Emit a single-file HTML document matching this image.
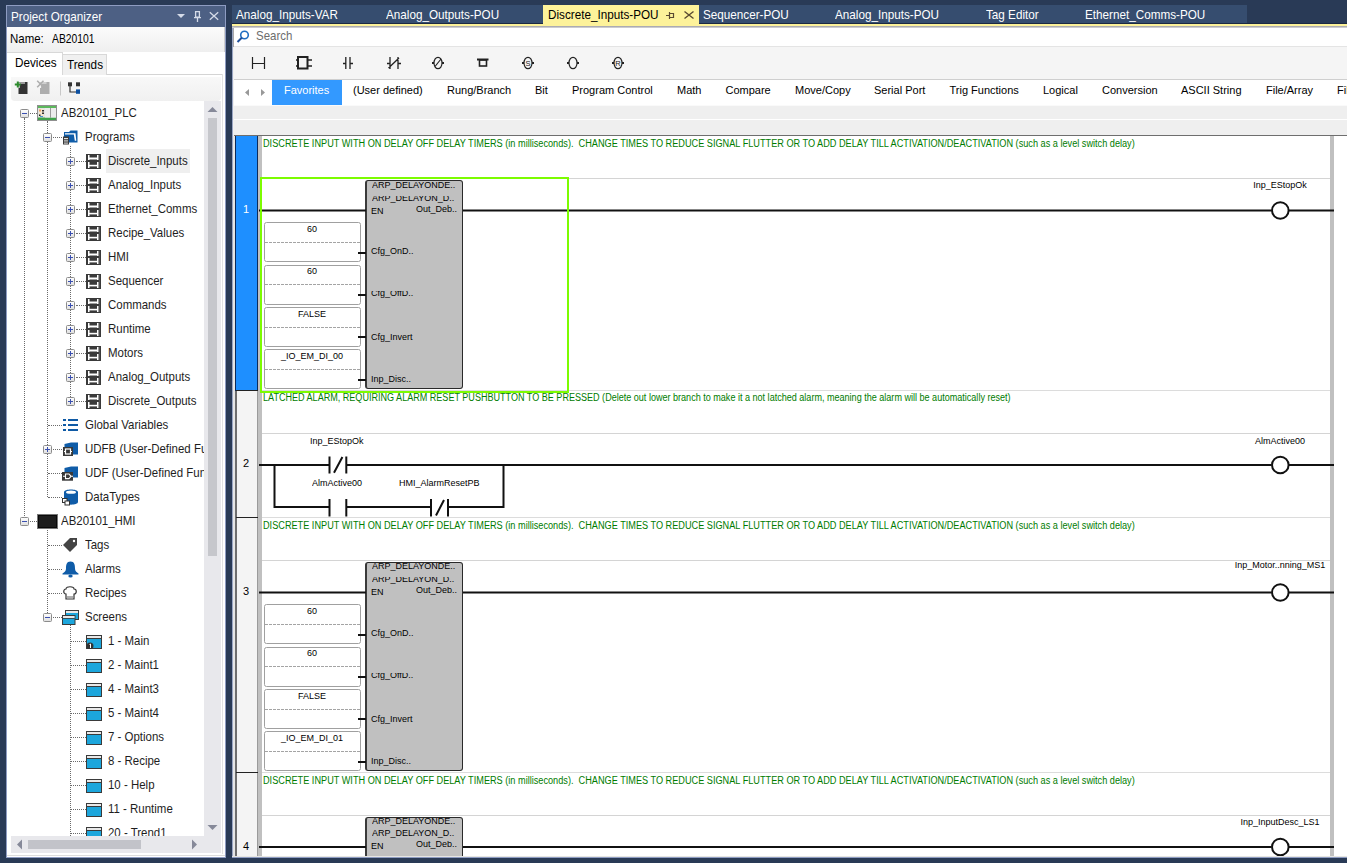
<!DOCTYPE html>
<html><head><meta charset="utf-8"><title>Discrete_Inputs-POU</title>
<style>
*{box-sizing:border-box}
html,body{margin:0;padding:0}
body{width:1347px;height:863px;background:#293a56;position:relative;overflow:hidden;font-family:'Liberation Sans', sans-serif;}
.a{position:absolute}
.t{position:absolute;white-space:pre;line-height:1}
.tr{font-size:12.6px;color:#1e1e1e;transform:scaleX(0.91);transform-origin:0 0}
.sg{font-size:12.6px;transform:scaleX(0.91);transform-origin:0 0}
.cat{font-size:11px;color:#000}
.lt{position:absolute;white-space:pre;line-height:1;font-size:9.5px;color:#000;transform:scaleX(0.947);transform-origin:0 0}
.ltc{transform:translateX(-50%) scaleX(0.947);transform-origin:50% 0}
.cm{position:absolute;white-space:pre;line-height:1;font-size:10px;color:#007c00;transform:scaleX(0.916);transform-origin:0 0}
</style></head><body>

<div class="a" style="left:6px;top:5px;width:220px;height:853px;background:#fff;border:1px solid #8e9cc2;border-top:none"></div>
<div class="a" style="left:6px;top:5px;width:220px;height:22px;background:#4d6084;border:1px solid #8e9cc2;border-bottom:none"></div>
<div class="t sg" style="left:11px;top:10px;font-size:13px;transform:scaleX(0.9);color:#fff">Project Organizer</div>
<svg class="a" style="left:170px;top:5px" width="56" height="22" viewBox="0 0 56 22"><path d="M7 9 L15 9 L11 13 Z" fill="#d5dbe8"/><path d="M25.6 6.6 h3.8 v5.6 h-3.8 z M24 12.6 h7 M27.5 12.6 v4.5" stroke="#d5dbe8" stroke-width="1.3" fill="none"/><path d="M39.8 7.3 L48.2 14.7 M48.2 7.3 L39.8 14.7" stroke="#d5dbe8" stroke-width="1.3"/></svg>
<div class="a" style="left:7px;top:27px;width:218px;height:25px;background:linear-gradient(#fbfbfb,#efefef);border-right:1px solid #cfcfcf"></div>
<div class="t sg" style="left:10px;top:33px;color:#000">Name:</div>
<div class="t sg" style="left:52px;top:33px;transform:scaleX(0.82);color:#000">AB20101</div>
<div class="a" style="left:62px;top:74px;width:161px;height:1px;background:#d4d4d4"></div>
<div class="a" style="left:222px;top:74px;width:1px;height:780px;background:#e2e2e2"></div>
<div class="a" style="left:62px;top:54px;width:45px;height:21px;background:#f0f0f0;border:1px solid #d8d8d8;border-bottom:none"></div>
<div class="a" style="left:7px;top:52px;width:56px;height:23px;background:#fff;border:1px solid #d8d8d8;border-left:none;border-bottom:none"></div>
<div class="t sg" style="left:15px;top:56px;font-size:13px;transform:scaleX(0.9);color:#000">Devices</div>
<div class="t sg" style="left:67px;top:58px;font-size:13px;transform:scaleX(0.9);color:#000">Trends</div>
<div class="a" style="left:11px;top:77px;width:210px;height:24px;background:linear-gradient(#f8f8f8,#f0f0f0);border-radius:0 0 4px 4px"></div>
<svg class="a" style="left:11px;top:77px" width="80" height="24" viewBox="0 0 80 24"><rect x="7.5" y="5" width="9" height="12" fill="#333"/><path d="M8 11 V6 h6" stroke="#fff" stroke-width="1.2" fill="none"/><path d="M3.8 7.5 h6 M6.8 4.5 v6" stroke="#2e8b2e" stroke-width="2"/><rect x="29" y="5" width="9.5" height="12" fill="#adadad"/><path d="M29.5 11 V6 h6" stroke="#f2f2f2" stroke-width="1.2" fill="none"/><path d="M26.2 3.8 L32.5 10.2 M32.5 3.8 L26.2 10.2" stroke="#adadad" stroke-width="1.5"/><rect x="49" y="4.5" width="1" height="14" fill="#c8c8c8"/><rect x="57" y="5.3" width="4" height="4" fill="#333"/><rect x="65" y="5.3" width="4" height="4" fill="#333"/><path d="M59 9 V15 H65" stroke="#333" stroke-width="1.2" fill="none"/><rect x="65" y="12.4" width="4" height="4.4" fill="#0b4fa0"/></svg>
<div class="a" style="left:11px;top:101px;width:193px;height:735px;background:#fff"></div>
<div class="a" style="left:204px;top:101px;width:17px;height:735px;background:#e8e8ec"></div>
<svg class="a" style="left:204px;top:101px" width="17" height="735"><path d="M3.5 11 L8.5 6 L13.5 11 Z" fill="#868999"/><path d="M3.5 724 L13.5 724 L8.5 729 Z" fill="#868999"/></svg>
<div class="a" style="left:208px;top:118px;width:9px;height:438px;background:#c6c7cc"></div>
<div class="a" style="left:11px;top:836px;width:210px;height:17px;background:#e8e8ec"></div>
<svg class="a" style="left:11px;top:836px" width="210" height="17"><path d="M6 8.5 L11 3.5 L11 13.5 Z" fill="#868999"/><path d="M181 3.5 L186 8.5 L181 13.5 Z" fill="#868999"/></svg>
<div class="a" style="left:28px;top:840px;width:113px;height:9px;background:#c2c3c9"></div>
<div class="a" style="left:7px;top:855px;width:218px;height:1px;background:#dcdcdc"></div>
<div class="a" style="left:0;top:0;width:204px;height:836px;overflow:hidden">
<div class="a" style="left:24px;top:118px;width:1px;height:402px;border-left:1px dotted #6a6a6a"></div>
<div class="a" style="left:47px;top:121px;width:1px;height:376px;border-left:1px dotted #6a6a6a"></div>
<div class="a" style="left:70px;top:146px;width:1px;height:255px;border-left:1px dotted #6a6a6a"></div>
<div class="a" style="left:47px;top:528px;width:1px;height:89px;border-left:1px dotted #6a6a6a"></div>
<div class="a" style="left:70px;top:624px;width:1px;height:212px;border-left:1px dotted #6a6a6a"></div>
<div class="a" style="left:30px;top:113px;width:7px;height:1px;border-top:1px dotted #6a6a6a"></div>
<svg class="a" style="left:20px;top:109px" width="9" height="9"><defs><linearGradient id="eg0" x1="0" y1="0" x2="0" y2="1"><stop offset="0" stop-color="#fff"/><stop offset="1" stop-color="#dedede"/></linearGradient></defs><rect x="0.5" y="0.5" width="8" height="8" rx="1" fill="url(#eg0)" stroke="#8c8c8c"/><rect x="2" y="4" width="5" height="1" fill="#3a4fb0"/></svg>
<svg class="a" style="left:37px;top:105px" width="20" height="16"><rect x="0.5" y="0.5" width="19" height="15" fill="#e4e4e4" stroke="#8f8f8f"/><rect x="1" y="1" width="18" height="2" fill="#5cb85c"/><rect x="1" y="12.5" width="18" height="2.5" fill="#3fa34a"/><rect x="2" y="4" width="5" height="8" fill="#f3e6cf"/><rect x="2" y="4.5" width="2" height="2" fill="#f0a060"/><rect x="5" y="5" width="2" height="1.5" fill="#333"/><rect x="5" y="7.5" width="2" height="1.5" fill="#333"/><rect x="2" y="9.5" width="1.5" height="1.5" fill="#222"/><rect x="3" y="11" width="3" height="1" fill="#4a90d0"/><rect x="8" y="3" width="5" height="9.5" fill="#ececec"/><rect x="13" y="3" width="1" height="9.5" fill="#9a9a9a"/><rect x="14" y="3" width="5" height="9.5" fill="#ececec"/></svg>
<div class="t tr" style="left:61.2px;top:107px">AB20101_PLC</div>
<div class="a" style="left:53px;top:137px;width:9px;height:1px;border-top:1px dotted #6a6a6a"></div>
<svg class="a" style="left:43px;top:133px" width="9" height="9"><defs><linearGradient id="eg1" x1="0" y1="0" x2="0" y2="1"><stop offset="0" stop-color="#fff"/><stop offset="1" stop-color="#dedede"/></linearGradient></defs><rect x="0.5" y="0.5" width="8" height="8" rx="1" fill="url(#eg1)" stroke="#8c8c8c"/><rect x="2" y="4" width="5" height="1" fill="#3a4fb0"/></svg>
<svg class="a" style="left:62px;top:129px" width="17" height="16"><path d="M2 3 h5 l1.5 -1.5 h7 v12 h-13.5 z" fill="#0f5ca8"/><path d="M3 4.2 h10.5 l0.8 7.5 h-1.5 l-1 -6.3 h-8.8 z" fill="#fff"/><rect x="1" y="7.5" width="6" height="8" fill="#3a3a3a"/><rect x="2" y="9" width="4" height="1.2" fill="#e0e0e0"/><rect x="2" y="11.3" width="4" height="1.2" fill="#cfcfcf"/><rect x="2" y="13.6" width="4" height="1" fill="#e0e0e0"/></svg>
<div class="t tr" style="left:84.7px;top:131px">Programs</div>
<div class="a" style="left:106px;top:149px;width:84px;height:24px;background:#efefef"></div>
<div class="a" style="left:76px;top:161px;width:10px;height:1px;border-top:1px dotted #6a6a6a"></div>
<svg class="a" style="left:66px;top:157px" width="9" height="9"><defs><linearGradient id="eg2" x1="0" y1="0" x2="0" y2="1"><stop offset="0" stop-color="#fff"/><stop offset="1" stop-color="#dedede"/></linearGradient></defs><rect x="0.5" y="0.5" width="8" height="8" rx="1" fill="url(#eg2)" stroke="#8c8c8c"/><rect x="2" y="4" width="5" height="1" fill="#3a4fb0"/><rect x="4" y="2" width="1" height="5" fill="#3a4fb0"/></svg>
<svg class="a" style="left:86px;top:154px" width="15" height="15"><rect x="0" y="0" width="15" height="15" fill="#3a3a3a"/><rect x="13" y="1" width="1" height="13" fill="#505050"/><rect x="2" y="1" width="1.5" height="5" fill="#fff"/><rect x="11" y="1" width="1.5" height="5" fill="#fff"/><rect x="3" y="3.5" width="8" height="2" fill="#fff"/><rect x="2" y="8" width="1.5" height="6" fill="#fff"/><rect x="11" y="8" width="1.5" height="6" fill="#fff"/><rect x="3" y="10.8" width="8" height="1.6" fill="#fff"/></svg>
<div class="t tr" style="left:107.7px;top:155px">Discrete_Inputs</div>
<div class="a" style="left:76px;top:185px;width:10px;height:1px;border-top:1px dotted #6a6a6a"></div>
<svg class="a" style="left:66px;top:181px" width="9" height="9"><defs><linearGradient id="eg3" x1="0" y1="0" x2="0" y2="1"><stop offset="0" stop-color="#fff"/><stop offset="1" stop-color="#dedede"/></linearGradient></defs><rect x="0.5" y="0.5" width="8" height="8" rx="1" fill="url(#eg3)" stroke="#8c8c8c"/><rect x="2" y="4" width="5" height="1" fill="#3a4fb0"/><rect x="4" y="2" width="1" height="5" fill="#3a4fb0"/></svg>
<svg class="a" style="left:86px;top:178px" width="15" height="15"><rect x="0" y="0" width="15" height="15" fill="#3a3a3a"/><rect x="13" y="1" width="1" height="13" fill="#505050"/><rect x="2" y="1" width="1.5" height="5" fill="#fff"/><rect x="11" y="1" width="1.5" height="5" fill="#fff"/><rect x="3" y="3.5" width="8" height="2" fill="#fff"/><rect x="2" y="8" width="1.5" height="6" fill="#fff"/><rect x="11" y="8" width="1.5" height="6" fill="#fff"/><rect x="3" y="10.8" width="8" height="1.6" fill="#fff"/></svg>
<div class="t tr" style="left:107.7px;top:179px">Analog_Inputs</div>
<div class="a" style="left:76px;top:209px;width:10px;height:1px;border-top:1px dotted #6a6a6a"></div>
<svg class="a" style="left:66px;top:205px" width="9" height="9"><defs><linearGradient id="eg4" x1="0" y1="0" x2="0" y2="1"><stop offset="0" stop-color="#fff"/><stop offset="1" stop-color="#dedede"/></linearGradient></defs><rect x="0.5" y="0.5" width="8" height="8" rx="1" fill="url(#eg4)" stroke="#8c8c8c"/><rect x="2" y="4" width="5" height="1" fill="#3a4fb0"/><rect x="4" y="2" width="1" height="5" fill="#3a4fb0"/></svg>
<svg class="a" style="left:86px;top:202px" width="15" height="15"><rect x="0" y="0" width="15" height="15" fill="#3a3a3a"/><rect x="13" y="1" width="1" height="13" fill="#505050"/><rect x="2" y="1" width="1.5" height="5" fill="#fff"/><rect x="11" y="1" width="1.5" height="5" fill="#fff"/><rect x="3" y="3.5" width="8" height="2" fill="#fff"/><rect x="2" y="8" width="1.5" height="6" fill="#fff"/><rect x="11" y="8" width="1.5" height="6" fill="#fff"/><rect x="3" y="10.8" width="8" height="1.6" fill="#fff"/></svg>
<div class="t tr" style="left:107.7px;top:203px">Ethernet_Comms</div>
<div class="a" style="left:76px;top:233px;width:10px;height:1px;border-top:1px dotted #6a6a6a"></div>
<svg class="a" style="left:66px;top:229px" width="9" height="9"><defs><linearGradient id="eg5" x1="0" y1="0" x2="0" y2="1"><stop offset="0" stop-color="#fff"/><stop offset="1" stop-color="#dedede"/></linearGradient></defs><rect x="0.5" y="0.5" width="8" height="8" rx="1" fill="url(#eg5)" stroke="#8c8c8c"/><rect x="2" y="4" width="5" height="1" fill="#3a4fb0"/><rect x="4" y="2" width="1" height="5" fill="#3a4fb0"/></svg>
<svg class="a" style="left:86px;top:226px" width="15" height="15"><rect x="0" y="0" width="15" height="15" fill="#3a3a3a"/><rect x="13" y="1" width="1" height="13" fill="#505050"/><rect x="2" y="1" width="1.5" height="5" fill="#fff"/><rect x="11" y="1" width="1.5" height="5" fill="#fff"/><rect x="3" y="3.5" width="8" height="2" fill="#fff"/><rect x="2" y="8" width="1.5" height="6" fill="#fff"/><rect x="11" y="8" width="1.5" height="6" fill="#fff"/><rect x="3" y="10.8" width="8" height="1.6" fill="#fff"/></svg>
<div class="t tr" style="left:107.7px;top:227px">Recipe_Values</div>
<div class="a" style="left:76px;top:257px;width:10px;height:1px;border-top:1px dotted #6a6a6a"></div>
<svg class="a" style="left:66px;top:253px" width="9" height="9"><defs><linearGradient id="eg6" x1="0" y1="0" x2="0" y2="1"><stop offset="0" stop-color="#fff"/><stop offset="1" stop-color="#dedede"/></linearGradient></defs><rect x="0.5" y="0.5" width="8" height="8" rx="1" fill="url(#eg6)" stroke="#8c8c8c"/><rect x="2" y="4" width="5" height="1" fill="#3a4fb0"/><rect x="4" y="2" width="1" height="5" fill="#3a4fb0"/></svg>
<svg class="a" style="left:86px;top:250px" width="15" height="15"><rect x="0" y="0" width="15" height="15" fill="#3a3a3a"/><rect x="13" y="1" width="1" height="13" fill="#505050"/><rect x="2" y="1" width="1.5" height="5" fill="#fff"/><rect x="11" y="1" width="1.5" height="5" fill="#fff"/><rect x="3" y="3.5" width="8" height="2" fill="#fff"/><rect x="2" y="8" width="1.5" height="6" fill="#fff"/><rect x="11" y="8" width="1.5" height="6" fill="#fff"/><rect x="3" y="10.8" width="8" height="1.6" fill="#fff"/></svg>
<div class="t tr" style="left:107.7px;top:251px">HMI</div>
<div class="a" style="left:76px;top:281px;width:10px;height:1px;border-top:1px dotted #6a6a6a"></div>
<svg class="a" style="left:66px;top:277px" width="9" height="9"><defs><linearGradient id="eg7" x1="0" y1="0" x2="0" y2="1"><stop offset="0" stop-color="#fff"/><stop offset="1" stop-color="#dedede"/></linearGradient></defs><rect x="0.5" y="0.5" width="8" height="8" rx="1" fill="url(#eg7)" stroke="#8c8c8c"/><rect x="2" y="4" width="5" height="1" fill="#3a4fb0"/><rect x="4" y="2" width="1" height="5" fill="#3a4fb0"/></svg>
<svg class="a" style="left:86px;top:274px" width="15" height="15"><rect x="0" y="0" width="15" height="15" fill="#3a3a3a"/><rect x="13" y="1" width="1" height="13" fill="#505050"/><rect x="2" y="1" width="1.5" height="5" fill="#fff"/><rect x="11" y="1" width="1.5" height="5" fill="#fff"/><rect x="3" y="3.5" width="8" height="2" fill="#fff"/><rect x="2" y="8" width="1.5" height="6" fill="#fff"/><rect x="11" y="8" width="1.5" height="6" fill="#fff"/><rect x="3" y="10.8" width="8" height="1.6" fill="#fff"/></svg>
<div class="t tr" style="left:107.7px;top:275px">Sequencer</div>
<div class="a" style="left:76px;top:305px;width:10px;height:1px;border-top:1px dotted #6a6a6a"></div>
<svg class="a" style="left:66px;top:301px" width="9" height="9"><defs><linearGradient id="eg8" x1="0" y1="0" x2="0" y2="1"><stop offset="0" stop-color="#fff"/><stop offset="1" stop-color="#dedede"/></linearGradient></defs><rect x="0.5" y="0.5" width="8" height="8" rx="1" fill="url(#eg8)" stroke="#8c8c8c"/><rect x="2" y="4" width="5" height="1" fill="#3a4fb0"/><rect x="4" y="2" width="1" height="5" fill="#3a4fb0"/></svg>
<svg class="a" style="left:86px;top:298px" width="15" height="15"><rect x="0" y="0" width="15" height="15" fill="#3a3a3a"/><rect x="13" y="1" width="1" height="13" fill="#505050"/><rect x="2" y="1" width="1.5" height="5" fill="#fff"/><rect x="11" y="1" width="1.5" height="5" fill="#fff"/><rect x="3" y="3.5" width="8" height="2" fill="#fff"/><rect x="2" y="8" width="1.5" height="6" fill="#fff"/><rect x="11" y="8" width="1.5" height="6" fill="#fff"/><rect x="3" y="10.8" width="8" height="1.6" fill="#fff"/></svg>
<div class="t tr" style="left:107.7px;top:299px">Commands</div>
<div class="a" style="left:76px;top:329px;width:10px;height:1px;border-top:1px dotted #6a6a6a"></div>
<svg class="a" style="left:66px;top:325px" width="9" height="9"><defs><linearGradient id="eg9" x1="0" y1="0" x2="0" y2="1"><stop offset="0" stop-color="#fff"/><stop offset="1" stop-color="#dedede"/></linearGradient></defs><rect x="0.5" y="0.5" width="8" height="8" rx="1" fill="url(#eg9)" stroke="#8c8c8c"/><rect x="2" y="4" width="5" height="1" fill="#3a4fb0"/><rect x="4" y="2" width="1" height="5" fill="#3a4fb0"/></svg>
<svg class="a" style="left:86px;top:322px" width="15" height="15"><rect x="0" y="0" width="15" height="15" fill="#3a3a3a"/><rect x="13" y="1" width="1" height="13" fill="#505050"/><rect x="2" y="1" width="1.5" height="5" fill="#fff"/><rect x="11" y="1" width="1.5" height="5" fill="#fff"/><rect x="3" y="3.5" width="8" height="2" fill="#fff"/><rect x="2" y="8" width="1.5" height="6" fill="#fff"/><rect x="11" y="8" width="1.5" height="6" fill="#fff"/><rect x="3" y="10.8" width="8" height="1.6" fill="#fff"/></svg>
<div class="t tr" style="left:107.7px;top:323px">Runtime</div>
<div class="a" style="left:76px;top:353px;width:10px;height:1px;border-top:1px dotted #6a6a6a"></div>
<svg class="a" style="left:66px;top:349px" width="9" height="9"><defs><linearGradient id="eg10" x1="0" y1="0" x2="0" y2="1"><stop offset="0" stop-color="#fff"/><stop offset="1" stop-color="#dedede"/></linearGradient></defs><rect x="0.5" y="0.5" width="8" height="8" rx="1" fill="url(#eg10)" stroke="#8c8c8c"/><rect x="2" y="4" width="5" height="1" fill="#3a4fb0"/><rect x="4" y="2" width="1" height="5" fill="#3a4fb0"/></svg>
<svg class="a" style="left:86px;top:346px" width="15" height="15"><rect x="0" y="0" width="15" height="15" fill="#3a3a3a"/><rect x="13" y="1" width="1" height="13" fill="#505050"/><rect x="2" y="1" width="1.5" height="5" fill="#fff"/><rect x="11" y="1" width="1.5" height="5" fill="#fff"/><rect x="3" y="3.5" width="8" height="2" fill="#fff"/><rect x="2" y="8" width="1.5" height="6" fill="#fff"/><rect x="11" y="8" width="1.5" height="6" fill="#fff"/><rect x="3" y="10.8" width="8" height="1.6" fill="#fff"/></svg>
<div class="t tr" style="left:107.7px;top:347px">Motors</div>
<div class="a" style="left:76px;top:377px;width:10px;height:1px;border-top:1px dotted #6a6a6a"></div>
<svg class="a" style="left:66px;top:373px" width="9" height="9"><defs><linearGradient id="eg11" x1="0" y1="0" x2="0" y2="1"><stop offset="0" stop-color="#fff"/><stop offset="1" stop-color="#dedede"/></linearGradient></defs><rect x="0.5" y="0.5" width="8" height="8" rx="1" fill="url(#eg11)" stroke="#8c8c8c"/><rect x="2" y="4" width="5" height="1" fill="#3a4fb0"/><rect x="4" y="2" width="1" height="5" fill="#3a4fb0"/></svg>
<svg class="a" style="left:86px;top:370px" width="15" height="15"><rect x="0" y="0" width="15" height="15" fill="#3a3a3a"/><rect x="13" y="1" width="1" height="13" fill="#505050"/><rect x="2" y="1" width="1.5" height="5" fill="#fff"/><rect x="11" y="1" width="1.5" height="5" fill="#fff"/><rect x="3" y="3.5" width="8" height="2" fill="#fff"/><rect x="2" y="8" width="1.5" height="6" fill="#fff"/><rect x="11" y="8" width="1.5" height="6" fill="#fff"/><rect x="3" y="10.8" width="8" height="1.6" fill="#fff"/></svg>
<div class="t tr" style="left:107.7px;top:371px">Analog_Outputs</div>
<div class="a" style="left:76px;top:401px;width:10px;height:1px;border-top:1px dotted #6a6a6a"></div>
<svg class="a" style="left:66px;top:397px" width="9" height="9"><defs><linearGradient id="eg12" x1="0" y1="0" x2="0" y2="1"><stop offset="0" stop-color="#fff"/><stop offset="1" stop-color="#dedede"/></linearGradient></defs><rect x="0.5" y="0.5" width="8" height="8" rx="1" fill="url(#eg12)" stroke="#8c8c8c"/><rect x="2" y="4" width="5" height="1" fill="#3a4fb0"/><rect x="4" y="2" width="1" height="5" fill="#3a4fb0"/></svg>
<svg class="a" style="left:86px;top:394px" width="15" height="15"><rect x="0" y="0" width="15" height="15" fill="#3a3a3a"/><rect x="13" y="1" width="1" height="13" fill="#505050"/><rect x="2" y="1" width="1.5" height="5" fill="#fff"/><rect x="11" y="1" width="1.5" height="5" fill="#fff"/><rect x="3" y="3.5" width="8" height="2" fill="#fff"/><rect x="2" y="8" width="1.5" height="6" fill="#fff"/><rect x="11" y="8" width="1.5" height="6" fill="#fff"/><rect x="3" y="10.8" width="8" height="1.6" fill="#fff"/></svg>
<div class="t tr" style="left:107.7px;top:395px">Discrete_Outputs</div>
<div class="a" style="left:48px;top:425px;width:14px;height:1px;border-top:1px dotted #6a6a6a"></div>
<svg class="a" style="left:62px;top:417px" width="17" height="16"><rect x="1" y="2" width="3" height="2" fill="#0f5aa5"/><rect x="6" y="2" width="10" height="2" fill="#0f5aa5"/><rect x="1" y="7" width="3" height="2" fill="#0f5aa5"/><rect x="6" y="7" width="10" height="2" fill="#0f5aa5"/><rect x="1" y="12" width="3" height="2" fill="#0f5aa5"/><rect x="6" y="12" width="10" height="2" fill="#0f5aa5"/></svg>
<div class="t tr" style="left:84.7px;top:419px">Global Variables</div>
<div class="a" style="left:53px;top:449px;width:9px;height:1px;border-top:1px dotted #6a6a6a"></div>
<svg class="a" style="left:43px;top:445px" width="9" height="9"><defs><linearGradient id="eg14" x1="0" y1="0" x2="0" y2="1"><stop offset="0" stop-color="#fff"/><stop offset="1" stop-color="#dedede"/></linearGradient></defs><rect x="0.5" y="0.5" width="8" height="8" rx="1" fill="url(#eg14)" stroke="#8c8c8c"/><rect x="2" y="4" width="5" height="1" fill="#3a4fb0"/><rect x="4" y="2" width="1" height="5" fill="#3a4fb0"/></svg>
<svg class="a" style="left:62px;top:442px" width="17" height="15"><path d="M2.5 2 L9 0.5 h7 v12 h-13.5 z" fill="#0f5ca8"/><rect x="9" y="0.5" width="2" height="3" fill="#fff" opacity="0"/><rect x="1" y="5" width="10" height="9" fill="#383838"/><rect x="3.5" y="7" width="5" height="5" fill="none" stroke="#fff" stroke-width="1.2"/><path d="M2 9.5 h1.5 M8.5 9.5 h1.5" stroke="#fff" stroke-width="1.2"/></svg>
<div class="t tr" style="left:84.7px;top:443px">UDFB (User-Defined Function Blocks)</div>
<div class="a" style="left:48px;top:473px;width:14px;height:1px;border-top:1px dotted #6a6a6a"></div>
<svg class="a" style="left:62px;top:466px" width="17" height="15"><path d="M2.5 2 L9 0.5 h7 v11 h-13.5 z" fill="#0f5ca8"/><rect x="0" y="6" width="11" height="8.7" fill="#383838"/><path d="M1 10.3 h2 M3.5 8 h3.5 l2 2.3 l-2 2.3 h-3.5 z M9 10.3 h2" fill="none" stroke="#fff" stroke-width="1.1"/></svg>
<div class="t tr" style="left:84.7px;top:467px">UDF (User-Defined Functions)</div>
<div class="a" style="left:48px;top:497px;width:14px;height:1px;border-top:1px dotted #6a6a6a"></div>
<svg class="a" style="left:62px;top:489px" width="17" height="17"><path d="M2 3 C2 -0.5 16 -0.5 16 3 V13 C16 16.5 2 16.5 2 13 z" fill="#0f5ca8"/><ellipse cx="9" cy="3.2" rx="5" ry="1.6" fill="#fff"/><rect x="0.5" y="9.5" width="4.5" height="4" fill="#fff" stroke="#333"/><rect x="3" y="12" width="4.5" height="4" fill="#fff" stroke="#333"/></svg>
<div class="t tr" style="left:84.7px;top:491px">DataTypes</div>
<div class="a" style="left:30px;top:521px;width:7px;height:1px;border-top:1px dotted #6a6a6a"></div>
<svg class="a" style="left:20px;top:517px" width="9" height="9"><defs><linearGradient id="eg17" x1="0" y1="0" x2="0" y2="1"><stop offset="0" stop-color="#fff"/><stop offset="1" stop-color="#dedede"/></linearGradient></defs><rect x="0.5" y="0.5" width="8" height="8" rx="1" fill="url(#eg17)" stroke="#8c8c8c"/><rect x="2" y="4" width="5" height="1" fill="#3a4fb0"/></svg>
<svg class="a" style="left:37px;top:514px" width="21" height="15"><rect x="0.5" y="0.5" width="20" height="14" fill="#0a0a0a" stroke="#777"/><rect x="2" y="2" width="17" height="11" fill="#1e1e1e"/></svg>
<div class="t tr" style="left:61.2px;top:515px">AB20101_HMI</div>
<div class="a" style="left:48px;top:545px;width:14px;height:1px;border-top:1px dotted #6a6a6a"></div>
<svg class="a" style="left:62px;top:537px" width="16" height="16"><path d="M8 1 h7 v7 l-7 7 l-7 -7 z" fill="#444"/><circle cx="12" cy="4" r="1.2" fill="#fff"/></svg>
<div class="t tr" style="left:84.7px;top:539px">Tags</div>
<div class="a" style="left:48px;top:569px;width:14px;height:1px;border-top:1px dotted #6a6a6a"></div>
<svg class="a" style="left:62px;top:561px" width="17" height="17"><path d="M8.5 0.5 C4.5 0.5 4 4 4 7.5 C4 10 2.5 11.2 0.5 12.5 V13.5 h16 V12.5 C14.5 11.2 13 10 13 7.5 C13 4 12.5 0.5 8.5 0.5 z" fill="#0f5ca8"/><ellipse cx="8.5" cy="15" rx="2.2" ry="1.6" fill="#0f5ca8"/></svg>
<div class="t tr" style="left:84.7px;top:563px">Alarms</div>
<div class="a" style="left:48px;top:593px;width:14px;height:1px;border-top:1px dotted #6a6a6a"></div>
<svg class="a" style="left:62px;top:585px" width="16" height="16"><path d="M4 9 C1 9 1 4 4 4 C4 1 12 1 12 4 C15 4 15 9 12 9 v5 h-8 z" fill="#fff" stroke="#333" stroke-width="1.2"/><path d="M6 11 v2 M8 11 v2 M10 11 v2" stroke="#333" stroke-width="0.8"/></svg>
<div class="t tr" style="left:84.7px;top:587px">Recipes</div>
<div class="a" style="left:53px;top:617px;width:9px;height:1px;border-top:1px dotted #6a6a6a"></div>
<svg class="a" style="left:43px;top:613px" width="9" height="9"><defs><linearGradient id="eg21" x1="0" y1="0" x2="0" y2="1"><stop offset="0" stop-color="#fff"/><stop offset="1" stop-color="#dedede"/></linearGradient></defs><rect x="0.5" y="0.5" width="8" height="8" rx="1" fill="url(#eg21)" stroke="#8c8c8c"/><rect x="2" y="4" width="5" height="1" fill="#3a4fb0"/></svg>
<svg class="a" style="left:62px;top:610px" width="17" height="15"><rect x="3.5" y="0.5" width="13" height="9" fill="#1ca6dc" stroke="#3a3a3a"/><rect x="4" y="1" width="12" height="2" fill="#e8e8e8"/><rect x="0.5" y="5.5" width="12.5" height="9" fill="#1ca6dc" stroke="#3a3a3a"/><rect x="1" y="6" width="11.5" height="2" fill="#e8e8e8"/><rect x="1" y="8" width="11.5" height="0.8" fill="#3a3a3a"/></svg>
<div class="t tr" style="left:84.7px;top:611px">Screens</div>
<div class="a" style="left:71px;top:641px;width:15px;height:1px;border-top:1px dotted #6a6a6a"></div>
<svg class="a" style="left:86px;top:634px" width="16" height="15"><rect x="0.5" y="1.5" width="15" height="13" fill="#1ca6dc" stroke="#3a3a3a"/><rect x="1" y="2" width="14" height="2" fill="#e8e8e8"/><rect x="1" y="4" width="14" height="1" fill="#3a3a3a"/><circle cx="4" cy="12" r="3.5" fill="#333"/><path d="M3.5 10.5 l1 -0.5 v4" stroke="#fff" stroke-width="1"/></svg>
<div class="t tr" style="left:107.7px;top:635px">1 - Main</div>
<div class="a" style="left:71px;top:665px;width:15px;height:1px;border-top:1px dotted #6a6a6a"></div>
<svg class="a" style="left:86px;top:658px" width="16" height="15"><rect x="0.5" y="1.5" width="15" height="13" fill="#1ca6dc" stroke="#3a3a3a"/><rect x="1" y="2" width="14" height="2" fill="#e8e8e8"/><rect x="1" y="4" width="14" height="1" fill="#3a3a3a"/></svg>
<div class="t tr" style="left:107.7px;top:659px">2 - Maint1</div>
<div class="a" style="left:71px;top:689px;width:15px;height:1px;border-top:1px dotted #6a6a6a"></div>
<svg class="a" style="left:86px;top:682px" width="16" height="15"><rect x="0.5" y="1.5" width="15" height="13" fill="#1ca6dc" stroke="#3a3a3a"/><rect x="1" y="2" width="14" height="2" fill="#e8e8e8"/><rect x="1" y="4" width="14" height="1" fill="#3a3a3a"/></svg>
<div class="t tr" style="left:107.7px;top:683px">4 - Maint3</div>
<div class="a" style="left:71px;top:713px;width:15px;height:1px;border-top:1px dotted #6a6a6a"></div>
<svg class="a" style="left:86px;top:706px" width="16" height="15"><rect x="0.5" y="1.5" width="15" height="13" fill="#1ca6dc" stroke="#3a3a3a"/><rect x="1" y="2" width="14" height="2" fill="#e8e8e8"/><rect x="1" y="4" width="14" height="1" fill="#3a3a3a"/></svg>
<div class="t tr" style="left:107.7px;top:707px">5 - Maint4</div>
<div class="a" style="left:71px;top:737px;width:15px;height:1px;border-top:1px dotted #6a6a6a"></div>
<svg class="a" style="left:86px;top:730px" width="16" height="15"><rect x="0.5" y="1.5" width="15" height="13" fill="#1ca6dc" stroke="#3a3a3a"/><rect x="1" y="2" width="14" height="2" fill="#e8e8e8"/><rect x="1" y="4" width="14" height="1" fill="#3a3a3a"/></svg>
<div class="t tr" style="left:107.7px;top:731px">7 - Options</div>
<div class="a" style="left:71px;top:761px;width:15px;height:1px;border-top:1px dotted #6a6a6a"></div>
<svg class="a" style="left:86px;top:754px" width="16" height="15"><rect x="0.5" y="1.5" width="15" height="13" fill="#1ca6dc" stroke="#3a3a3a"/><rect x="1" y="2" width="14" height="2" fill="#e8e8e8"/><rect x="1" y="4" width="14" height="1" fill="#3a3a3a"/></svg>
<div class="t tr" style="left:107.7px;top:755px">8 - Recipe</div>
<div class="a" style="left:71px;top:785px;width:15px;height:1px;border-top:1px dotted #6a6a6a"></div>
<svg class="a" style="left:86px;top:778px" width="16" height="15"><rect x="0.5" y="1.5" width="15" height="13" fill="#1ca6dc" stroke="#3a3a3a"/><rect x="1" y="2" width="14" height="2" fill="#e8e8e8"/><rect x="1" y="4" width="14" height="1" fill="#3a3a3a"/></svg>
<div class="t tr" style="left:107.7px;top:779px">10 - Help</div>
<div class="a" style="left:71px;top:809px;width:15px;height:1px;border-top:1px dotted #6a6a6a"></div>
<svg class="a" style="left:86px;top:802px" width="16" height="15"><rect x="0.5" y="1.5" width="15" height="13" fill="#1ca6dc" stroke="#3a3a3a"/><rect x="1" y="2" width="14" height="2" fill="#e8e8e8"/><rect x="1" y="4" width="14" height="1" fill="#3a3a3a"/></svg>
<div class="t tr" style="left:107.7px;top:803px">11 - Runtime</div>
<div class="a" style="left:71px;top:833px;width:15px;height:1px;border-top:1px dotted #6a6a6a"></div>
<svg class="a" style="left:86px;top:826px" width="16" height="15"><rect x="0.5" y="1.5" width="15" height="13" fill="#1ca6dc" stroke="#3a3a3a"/><rect x="1" y="2" width="14" height="2" fill="#e8e8e8"/><rect x="1" y="4" width="14" height="1" fill="#3a3a3a"/></svg>
<div class="t tr" style="left:107.7px;top:827px">20 - Trend1</div>
</div>
<div class="a" style="left:204px;top:101px;width:17px;height:735px;background:#e8e8ec"></div>
<svg class="a" style="left:204px;top:101px" width="17" height="735"><path d="M3.5 11 L8.5 6 L13.5 11 Z" fill="#868999"/><path d="M3.5 724 L13.5 724 L8.5 729 Z" fill="#868999"/></svg>
<div class="a" style="left:208px;top:118px;width:9px;height:438px;background:#c6c7cc"></div>
<div class="a" style="left:11px;top:836px;width:210px;height:17px;background:#e8e8ec"></div>
<svg class="a" style="left:11px;top:836px" width="210" height="17"><path d="M6 8.5 L11 3.5 L11 13.5 Z" fill="#868999"/><path d="M181 3.5 L186 8.5 L181 13.5 Z" fill="#868999"/></svg>
<div class="a" style="left:28px;top:840px;width:113px;height:9px;background:#c2c3c9"></div>
<div class="a" style="left:232px;top:5px;width:1015px;height:18px;background:#364d6f"></div>
<div class="a" style="left:232px;top:23px;width:1115px;height:1px;background:#1c2a44"></div>
<div class="a" style="left:232px;top:24px;width:1115px;height:2px;background:#fdf29a"></div>
<div class="a" style="left:543px;top:5px;width:156px;height:21px;background:#fdf29a"></div>
<div class="t sg" style="left:236px;top:9px;font-size:12.8px;transform:scaleX(0.914);color:#fff">Analog_Inputs-VAR</div>
<div class="t sg" style="left:385.5px;top:9px;font-size:12.8px;transform:scaleX(0.914);color:#fff">Analog_Outputs-POU</div>
<div class="t sg" style="left:547.5px;top:9px;font-size:12.8px;transform:scaleX(0.914);color:#000">Discrete_Inputs-POU</div>
<div class="t sg" style="left:703px;top:9px;font-size:12.8px;transform:scaleX(0.914);color:#fff">Sequencer-POU</div>
<div class="t sg" style="left:834.5px;top:9px;font-size:12.8px;transform:scaleX(0.914);color:#fff">Analog_Inputs-POU</div>
<div class="t sg" style="left:986px;top:9px;font-size:12.8px;transform:scaleX(0.914);color:#fff">Tag Editor</div>
<div class="t sg" style="left:1085px;top:9px;font-size:12.8px;transform:scaleX(0.914);color:#fff">Ethernet_Comms-POU</div>
<svg class="a" style="left:0;top:0" width="700" height="27"><path d="M666 15.5 h3 M669.5 12 v7 M670 13.5 h3.5 v4 h-3.5" stroke="#5a4a32" stroke-width="1.2" fill="none"/><path d="M684.5 11.5 L693.5 18.5 M693.5 11.5 L684.5 18.5" stroke="#5a4a32" stroke-width="1.4"/></svg>
<div class="a" style="left:232px;top:26px;width:1115px;height:831px;background:#f0f0f0;border-left:1px solid #9aa6c4"></div>
<div class="a" style="left:232px;top:26px;width:1115px;height:2px;background:linear-gradient(#9b9ba4,#dcdcdc)"></div>
<div class="a" style="left:234px;top:28px;width:1113px;height:18px;background:#fff"></div>
<div class="a" style="left:234px;top:46px;width:1113px;height:1px;background:#e4e4e4"></div>
<svg class="a" style="left:236px;top:29px" width="14" height="16"><circle cx="8.5" cy="6" r="3.8" stroke="#1f6dc2" stroke-width="1.6" fill="none"/><path d="M6 8.5 L1.5 13" stroke="#1f4f9a" stroke-width="2"/></svg>
<div class="t sg" style="left:256px;top:30px;color:#6d6d6d">Search</div>
<div class="a" style="left:234px;top:47px;width:1113px;height:32px;background:#f5f5f5"></div>
<div class="a" style="left:234px;top:79px;width:1113px;height:1px;background:#cfcfcf"></div>
<div class="a" style="left:233px;top:28px;width:1px;height:19px;background:#a8a8a8"></div>
<svg class="a" style="left:234px;top:47px" width="420" height="31" viewBox="234 47 420 31"><g stroke="#222" fill="none" stroke-width="1.2"><path d="M252.5 57 v12 M264.5 57 v12 M252.5 63.5 h12"/><rect x="298" y="57" width="9.5" height="11.5" stroke-width="2"/><path d="M296 60 h2 M296 66 h2 M307 60 h5 M307 66 h5" stroke-width="1.6"/><path d="M345.8 57 v12 M350 57 v12 M343 63.5 h3 M350 63.5 h3" stroke-width="1.3"/><path d="M390 57 v12 M398 57 v12 M387 63.5 h3 M398 63.5 h3 M388.5 68 L399 58" stroke-width="1.3"/><ellipse cx="438" cy="63" rx="4" ry="5.7"/><path d="M432 63 h2 M442 63 h2" stroke-width="2"/><path d="M435 66.5 L441 59" /><path d="M477 59.5 h11.5" stroke-width="2"/><rect x="479.5" y="60" width="7" height="6" stroke-width="1.6"/><ellipse cx="528" cy="63" rx="4" ry="5.7"/><path d="M522 63 h2 M532 63 h2" stroke-width="2"/><ellipse cx="573" cy="63" rx="4" ry="5.7"/><path d="M567 63 h2 M577 63 h2" stroke-width="2"/><ellipse cx="618" cy="63" rx="4" ry="5.7"/><path d="M612 63 h2 M622 63 h2" stroke-width="2"/></g><text x="528" y="66" font-size="7.5" text-anchor="middle" fill="#222" font-family="Liberation Sans">S</text><text x="618" y="66" font-size="7.5" text-anchor="middle" fill="#222" font-family="Liberation Sans">R</text></svg>
<div class="a" style="left:234px;top:80px;width:1113px;height:26px;background:#fff"></div>
<svg class="a" style="left:240px;top:85px" width="30" height="14"><path d="M5 7.5 L9 4 v7 z M21 4 L25 7.5 L21 11 z" fill="#999"/></svg>
<div class="a" style="left:272px;top:80px;width:70px;height:25px;background:#3399ff"></div>
<div class="t cat" style="left:284px;top:85px;color:#fff">Favorites</div>
<div class="t cat" style="left:353px;top:85px;color:#000">(User defined)</div>
<div class="t cat" style="left:447px;top:85px;color:#000">Rung/Branch</div>
<div class="t cat" style="left:535px;top:85px;color:#000">Bit</div>
<div class="t cat" style="left:572px;top:85px;color:#000">Program Control</div>
<div class="t cat" style="left:677px;top:85px;color:#000">Math</div>
<div class="t cat" style="left:725.5px;top:85px;color:#000">Compare</div>
<div class="t cat" style="left:795px;top:85px;color:#000">Move/Copy</div>
<div class="t cat" style="left:874px;top:85px;color:#000">Serial Port</div>
<div class="t cat" style="left:949.5px;top:85px;color:#000">Trig Functions</div>
<div class="t cat" style="left:1043px;top:85px;color:#000">Logical</div>
<div class="t cat" style="left:1102px;top:85px;color:#000">Conversion</div>
<div class="t cat" style="left:1181px;top:85px;color:#000">ASCII String</div>
<div class="t cat" style="left:1266px;top:85px;color:#000">File/Array</div>
<div class="t cat" style="left:1337px;top:85px;color:#000">File</div>
<div class="a" style="left:234px;top:105px;width:1113px;height:1px;background:#fafafa"></div>
<div class="a" style="left:234px;top:106px;width:1113px;height:13px;background:#efefef"></div>
<div class="a" style="left:234px;top:119px;width:1113px;height:1px;background:#fff"></div>
<div class="a" style="left:234px;top:120px;width:1113px;height:15px;background:#efefef"></div>
<div class="a" style="left:234px;top:135px;width:1113px;height:1px;background:#6e6e6e"></div>
<div class="a" style="left:234px;top:136px;width:1113px;height:720px;background:#fff"></div>
<div class="a" style="left:233px;top:136px;width:2px;height:720px;background:#e6e6e6"></div>
<div class="a" style="left:235px;top:136px;width:2px;height:720px;background:#6e6e6e"></div>
<div class="a" style="left:237px;top:136px;width:20px;height:720px;background:#f4f4f4"></div>
<div class="a" style="left:257px;top:136px;width:1px;height:720px;background:#9a9a9a"></div>
<div class="a" style="left:258px;top:136px;width:4px;height:720px;background:#c0c0c0"></div>
<div class="a" style="left:1330px;top:136px;width:4px;height:720px;background:#c0c0c0"></div>
<div class="a" style="left:235px;top:136px;width:23px;height:255px;background:#1e8fff;border:1px solid #0c2a5a;border-top:none"></div>
<div class="a" style="left:262px;top:178px;width:1068px;height:1px;background:#d4d4d4"></div>
<div class="cm" style="left:262.5px;top:139.00px">DISCRETE INPUT WITH ON DELAY OFF DELAY TIMERS (in milliseconds).  CHANGE TIMES TO REDUCE SIGNAL FLUTTER OR TO ADD DELAY TILL ACTIVATION/DEACTIVATION (such as a level switch delay)</div>
<div class="t" style="left:243px;top:204px;font-size:11px;color:#fff">1</div>
<div class="a" style="left:236px;top:390px;width:22px;height:1px;background:#222"></div>
<div class="a" style="left:262px;top:390px;width:1068px;height:1px;background:#dcdcdc"></div>
<div class="a" style="left:365px;top:180px;width:98px;height:209px;background:#c0c0c0;border:1px solid #2a2a2a;border-left:2px solid #3a3a3a;border-radius:3px"></div>
<div class="a" style="left:369.7px;top:181.80px;width:95px;height:12.00px;overflow:hidden"><div class="lt" style="left:2px;top:-1.50px">ARP_DELAYONDE..</div></div>
<div class="a" style="left:369.7px;top:195.50px;width:95px;height:10.80px;overflow:hidden"><div class="lt" style="left:2px;top:-2.70px">ARP_DELAYON_D..</div></div>
<div class="lt" style="left:371px;top:205.80px;">EN</div>
<div class="a" style="left:414px;top:205.20px;width:95px;height:12.00px;overflow:hidden"><div class="lt" style="left:2px;top:-1.50px">Out_Deb..</div></div>
<div class="a" style="left:263.5px;top:222.4px;width:97px;height:40px;background:#fff;border:1px solid #a0a0a0;border-radius:2.5px"></div>
<div class="a" style="left:264.5px;top:241.9px;width:95px;height:1px;background:repeating-linear-gradient(90deg,#a4a4a4 0 3px,transparent 3px 4px)"></div>
<div class="lt ltc" style="left:312.3px;top:224.10px;">60</div>
<div class="a" style="left:358px;top:251.5px;width:8px;height:2px;background:#111"></div>
<div class="lt" style="left:371px;top:245.50px;">Cfg_OnD..</div>
<div class="a" style="left:263.5px;top:264.7px;width:97px;height:40px;background:#fff;border:1px solid #a0a0a0;border-radius:2.5px"></div>
<div class="a" style="left:264.5px;top:284.2px;width:95px;height:1px;background:repeating-linear-gradient(90deg,#a4a4a4 0 3px,transparent 3px 4px)"></div>
<div class="lt ltc" style="left:312.3px;top:266.43px;">60</div>
<div class="a" style="left:358px;top:293.8px;width:8px;height:2px;background:#111"></div>
<div class="a" style="left:370px;top:290.8px;width:60px;height:9px;overflow:hidden"><div class="lt" style="left:1px;top:-3.03px">Cfg_OffD..</div></div>
<div class="a" style="left:263.5px;top:307.1px;width:97px;height:40px;background:#fff;border:1px solid #a0a0a0;border-radius:2.5px"></div>
<div class="a" style="left:264.5px;top:326.6px;width:95px;height:1px;background:repeating-linear-gradient(90deg,#a4a4a4 0 3px,transparent 3px 4px)"></div>
<div class="lt ltc" style="left:312.3px;top:308.76px;">FALSE</div>
<div class="a" style="left:358px;top:336.2px;width:8px;height:2px;background:#111"></div>
<div class="lt" style="left:371px;top:331.80px;">Cfg_Invert</div>
<div class="a" style="left:263.5px;top:349.4px;width:97px;height:40px;background:#fff;border:1px solid #a0a0a0;border-radius:2.5px"></div>
<div class="a" style="left:264.5px;top:368.9px;width:95px;height:1px;background:repeating-linear-gradient(90deg,#a4a4a4 0 3px,transparent 3px 4px)"></div>
<div class="lt ltc" style="left:312.3px;top:351.09px;">_IO_EM_DI_00</div>
<div class="a" style="left:358px;top:378.5px;width:8px;height:2px;background:#111"></div>
<div class="lt" style="left:371px;top:373.50px;">Inp_Disc..</div>
<svg class="a" style="left:0;top:0" width="1347" height="863"><g stroke="#111" stroke-width="2" fill="none"><path d="M259 210.5 H366 M463 210.5 H1271.5 M1289 210.5 H1334"/><circle cx="1280.3" cy="210.5" r="8.3" fill="#fff"/></g></svg>
<div class="lt ltc" style="left:1280px;top:180.40px;">Inp_EStopOk</div>
<div class="a" style="left:260px;top:177px;width:309px;height:216px;border:2px solid #7cfc00"></div>
<div class="a" style="left:262px;top:433px;width:1068px;height:1px;background:#d4d4d4"></div>
<div class="cm" style="left:262.5px;top:393.00px;transform:scaleX(0.905)">LATCHED ALARM, REQUIRING ALARM RESET PUSHBUTTON TO BE PRESSED (Delete out lower branch to make it a not latched alarm, meaning the alarm will be automatically reset)</div>
<div class="t" style="left:243px;top:458px;font-size:11px;color:#000">2</div>
<div class="a" style="left:236px;top:517px;width:22px;height:1px;background:#222"></div>
<div class="a" style="left:262px;top:517px;width:1068px;height:1px;background:#dcdcdc"></div>
<svg class="a" style="left:0;top:0" width="1347" height="863"><g stroke="#111" stroke-width="2" fill="none"><path d="M259 465 H330 M346 465 H1271.5 M1289 465 H1334"/><path d="M329.5 456.5 V473.5 M346.3 456.5 V473.5 M334 472.8 L342.4 457" /><path d="M274.5 465 V507 H330 M346 507 H431 M448 507 H503.5 V465"/><path d="M329.5 499 V516.5 M346.3 499 V516.5 M431 499 V516.5 M448 499 V516.5 M436 515.5 L444 500"/><circle cx="1280.3" cy="465" r="8.3" fill="#fff"/></g></svg>
<div class="lt" style="left:310.4px;top:435.80px;">Inp_EStopOk</div>
<div class="lt ltc" style="left:1280px;top:435.80px;">AlmActive00</div>
<div class="lt" style="left:312.2px;top:477.80px;">AlmActive00</div>
<div class="lt" style="left:399px;top:477.80px;">HMI_AlarmResetPB</div>
<div class="a" style="left:262px;top:560px;width:1068px;height:1px;background:#d4d4d4"></div>
<div class="cm" style="left:262.5px;top:521.00px">DISCRETE INPUT WITH ON DELAY OFF DELAY TIMERS (in milliseconds).  CHANGE TIMES TO REDUCE SIGNAL FLUTTER OR TO ADD DELAY TILL ACTIVATION/DEACTIVATION (such as a level switch delay)</div>
<div class="t" style="left:243px;top:586px;font-size:11px;color:#000">3</div>
<div class="a" style="left:236px;top:772px;width:22px;height:1px;background:#222"></div>
<div class="a" style="left:262px;top:772px;width:1068px;height:1px;background:#dcdcdc"></div>
<div class="a" style="left:365px;top:562px;width:98px;height:209px;background:#c0c0c0;border:1px solid #2a2a2a;border-left:2px solid #3a3a3a;border-radius:3px"></div>
<div class="a" style="left:369.7px;top:562.80px;width:95px;height:12.00px;overflow:hidden"><div class="lt" style="left:2px;top:-1.50px">ARP_DELAYONDE..</div></div>
<div class="a" style="left:369.7px;top:576.50px;width:95px;height:10.80px;overflow:hidden"><div class="lt" style="left:2px;top:-2.70px">ARP_DELAYON_D..</div></div>
<div class="lt" style="left:371px;top:586.80px;">EN</div>
<div class="a" style="left:414px;top:587.40px;width:95px;height:10.80px;overflow:hidden"><div class="lt" style="left:2px;top:-2.70px">Out_Deb..</div></div>
<div class="a" style="left:263.5px;top:604.4px;width:97px;height:40px;background:#fff;border:1px solid #a0a0a0;border-radius:2.5px"></div>
<div class="a" style="left:264.5px;top:623.9px;width:95px;height:1px;background:repeating-linear-gradient(90deg,#a4a4a4 0 3px,transparent 3px 4px)"></div>
<div class="lt ltc" style="left:312.3px;top:606.10px;">60</div>
<div class="a" style="left:358px;top:633.5px;width:8px;height:2px;background:#111"></div>
<div class="lt" style="left:371px;top:627.50px;">Cfg_OnD..</div>
<div class="a" style="left:263.5px;top:646.7px;width:97px;height:40px;background:#fff;border:1px solid #a0a0a0;border-radius:2.5px"></div>
<div class="a" style="left:264.5px;top:666.2px;width:95px;height:1px;background:repeating-linear-gradient(90deg,#a4a4a4 0 3px,transparent 3px 4px)"></div>
<div class="lt ltc" style="left:312.3px;top:648.43px;">60</div>
<div class="a" style="left:358px;top:675.8px;width:8px;height:2px;background:#111"></div>
<div class="a" style="left:370px;top:672.8px;width:60px;height:9px;overflow:hidden"><div class="lt" style="left:1px;top:-3.03px">Cfg_OffD..</div></div>
<div class="a" style="left:263.5px;top:689.1px;width:97px;height:40px;background:#fff;border:1px solid #a0a0a0;border-radius:2.5px"></div>
<div class="a" style="left:264.5px;top:708.6px;width:95px;height:1px;background:repeating-linear-gradient(90deg,#a4a4a4 0 3px,transparent 3px 4px)"></div>
<div class="lt ltc" style="left:312.3px;top:690.76px;">FALSE</div>
<div class="a" style="left:358px;top:718.2px;width:8px;height:2px;background:#111"></div>
<div class="lt" style="left:371px;top:713.80px;">Cfg_Invert</div>
<div class="a" style="left:263.5px;top:731.4px;width:97px;height:40px;background:#fff;border:1px solid #a0a0a0;border-radius:2.5px"></div>
<div class="a" style="left:264.5px;top:750.9px;width:95px;height:1px;background:repeating-linear-gradient(90deg,#a4a4a4 0 3px,transparent 3px 4px)"></div>
<div class="lt ltc" style="left:312.3px;top:733.09px;">_IO_EM_DI_01</div>
<div class="a" style="left:358px;top:760.5px;width:8px;height:2px;background:#111"></div>
<div class="lt" style="left:371px;top:755.50px;">Inp_Disc..</div>
<svg class="a" style="left:0;top:0" width="1347" height="863"><g stroke="#111" stroke-width="2" fill="none"><path d="M259 592.5 H366 M463 592.5 H1271.5 M1289 592.5 H1334"/><circle cx="1280.3" cy="592.5" r="8.3" fill="#fff"/></g></svg>
<div class="lt ltc" style="left:1280px;top:560.00px;">Inp_Motor..nning_MS1</div>
<div class="a" style="left:262px;top:815px;width:1068px;height:1px;background:#d4d4d4"></div>
<div class="cm" style="left:262.5px;top:776.00px">DISCRETE INPUT WITH ON DELAY OFF DELAY TIMERS (in milliseconds).  CHANGE TIMES TO REDUCE SIGNAL FLUTTER OR TO ADD DELAY TILL ACTIVATION/DEACTIVATION (such as a level switch delay)</div>
<div class="t" style="left:243px;top:841px;font-size:11px;color:#000">4</div>
<div class="a" style="left:236px;top:1027px;width:22px;height:1px;background:#222"></div>
<div class="a" style="left:262px;top:1027px;width:1068px;height:1px;background:#dcdcdc"></div>
<div class="a" style="left:365px;top:817px;width:98px;height:209px;background:#c0c0c0;border:1px solid #2a2a2a;border-left:2px solid #3a3a3a;border-radius:3px"></div>
<div class="a" style="left:369.7px;top:818.40px;width:95px;height:10.80px;overflow:hidden"><div class="lt" style="left:2px;top:-2.70px">ARP_DELAYONDE..</div></div>
<div class="a" style="left:369.7px;top:829.70px;width:95px;height:12.00px;overflow:hidden"><div class="lt" style="left:2px;top:-1.50px">ARP_DELAYON_D..</div></div>
<div class="lt" style="left:371px;top:841.20px;">EN</div>
<div class="a" style="left:414px;top:840.60px;width:95px;height:12.00px;overflow:hidden"><div class="lt" style="left:2px;top:-1.50px">Out_Deb..</div></div>
<div class="a" style="left:263.5px;top:859.4px;width:97px;height:40px;background:#fff;border:1px solid #a0a0a0;border-radius:2.5px"></div>
<div class="a" style="left:264.5px;top:878.9px;width:95px;height:1px;background:repeating-linear-gradient(90deg,#a4a4a4 0 3px,transparent 3px 4px)"></div>
<div class="lt ltc" style="left:312.3px;top:861.10px;">60</div>
<div class="a" style="left:358px;top:888.5px;width:8px;height:2px;background:#111"></div>
<div class="lt" style="left:371px;top:882.50px;">Cfg_OnD..</div>
<div class="a" style="left:263.5px;top:901.7px;width:97px;height:40px;background:#fff;border:1px solid #a0a0a0;border-radius:2.5px"></div>
<div class="a" style="left:264.5px;top:921.2px;width:95px;height:1px;background:repeating-linear-gradient(90deg,#a4a4a4 0 3px,transparent 3px 4px)"></div>
<div class="lt ltc" style="left:312.3px;top:903.43px;">60</div>
<div class="a" style="left:358px;top:930.8px;width:8px;height:2px;background:#111"></div>
<div class="a" style="left:370px;top:927.8px;width:60px;height:9px;overflow:hidden"><div class="lt" style="left:1px;top:-3.03px">Cfg_OffD..</div></div>
<div class="a" style="left:263.5px;top:944.1px;width:97px;height:40px;background:#fff;border:1px solid #a0a0a0;border-radius:2.5px"></div>
<div class="a" style="left:264.5px;top:963.6px;width:95px;height:1px;background:repeating-linear-gradient(90deg,#a4a4a4 0 3px,transparent 3px 4px)"></div>
<div class="lt ltc" style="left:312.3px;top:945.76px;">FALSE</div>
<div class="a" style="left:358px;top:973.2px;width:8px;height:2px;background:#111"></div>
<div class="lt" style="left:371px;top:968.80px;">Cfg_Invert</div>
<div class="a" style="left:263.5px;top:986.4px;width:97px;height:40px;background:#fff;border:1px solid #a0a0a0;border-radius:2.5px"></div>
<div class="a" style="left:264.5px;top:1005.9px;width:95px;height:1px;background:repeating-linear-gradient(90deg,#a4a4a4 0 3px,transparent 3px 4px)"></div>
<div class="lt ltc" style="left:312.3px;top:988.09px;">_IO_EM_DI_02</div>
<div class="a" style="left:358px;top:1015.5px;width:8px;height:2px;background:#111"></div>
<div class="lt" style="left:371px;top:1010.50px;">Inp_Disc..</div>
<svg class="a" style="left:0;top:0" width="1347" height="863"><g stroke="#111" stroke-width="2" fill="none"><path d="M259 847 H366 M463 847 H1271.5 M1289 847 H1334"/><circle cx="1280.3" cy="847" r="8.3" fill="#fff"/></g></svg>
<div class="lt ltc" style="left:1280px;top:817.40px;">Inp_InputDesc_LS1</div>
<div class="a" style="left:226px;top:858px;width:1121px;height:5px;background:#293a56"></div>
<div class="a" style="left:232px;top:856px;width:1115px;height:1px;background:#e6e6e2"></div>
<div class="a" style="left:232px;top:857px;width:1115px;height:1px;background:#8e9cc2"></div>
<div class="a" style="left:0;top:858px;width:232px;height:5px;background:#293a56"></div>
</body></html>
